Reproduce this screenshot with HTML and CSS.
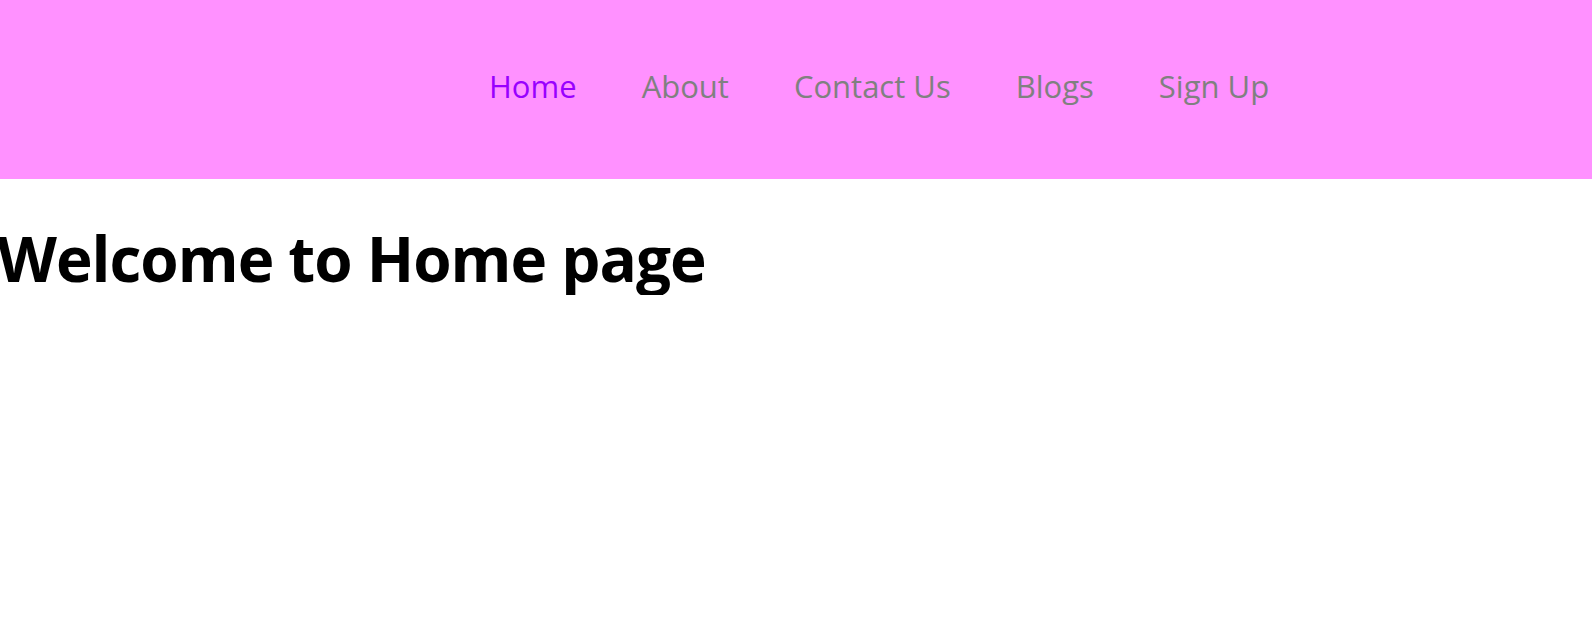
FILE: index.html
```html
<!DOCTYPE html>
<html>
<head>
<meta charset="utf-8">
<link rel="stylesheet" href="styles.css">
</head>
<body>
<header class="header">
  <nav class="nav">
    <a class="nav-link active" href="#">Home</a>
    <a class="nav-link" href="#">About</a>
    <a class="nav-link" href="#">Contact Us</a>
    <a class="nav-link" href="#">Blogs</a>
    <a class="nav-link" href="#">Sign Up</a>
  </nav>
</header>
<main>
  <h1 class="title">Welcome to Home page</h1>
</main>
</body>
</html>
```
FILE: styles.css
```css
* { box-sizing: border-box; }
html, body { margin: 0; padding: 0; background: #fff; }
body { font-family: "Open Sans", "Noto Sans", sans-serif; }
.header {
  background: #ff91ff;
  height: 179px;
  display: flex;
  align-items: center;
}
.nav {
  display: flex;
  gap: 65px;
  padding-left: 489px;
  padding-bottom: 7px;
}
.nav-link {
  font-size: 31px;
  color: #808080;
  text-decoration: none;
}
.nav-link.active { color: #9900ff; }
.title {
  margin: 42px 0 0 -3px;
  font-size: 62px;
  font-weight: 700;
  color: #000;
  letter-spacing: -1px;
  line-height: 1.2;
}
```
